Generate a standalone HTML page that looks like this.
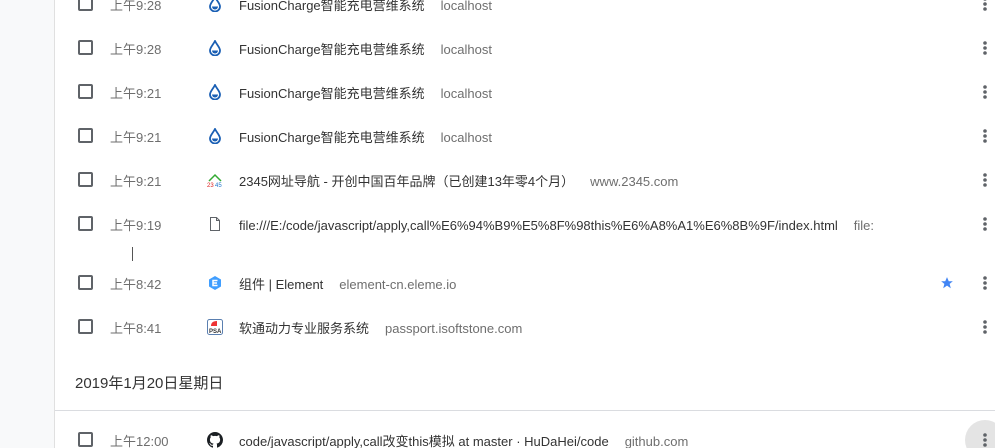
<!DOCTYPE html>
<html style="overflow:hidden;height:448px"><head><meta charset="utf-8"><style>
body{margin:0;width:995px;height:448px;overflow:hidden;background:#f8f9fa;font-family:"Liberation Sans","Noto Sans CJK SC",sans-serif;position:relative}
.card{position:absolute;left:54px;top:0;width:941px;height:448px;background:#fff;border-left:1px solid #e0e0e0}
.row{position:absolute;left:0;width:995px;height:1px;font-size:13px}
.cb{position:absolute;left:78px;width:11px;height:11px;border:2px solid #5f6368;border-radius:2px;top:-8px}
.t{position:absolute;left:110px;top:-6px;line-height:16px;color:#6e6e6e;white-space:nowrap}
.ic{position:absolute;left:207px;top:-8px;width:16px;height:16px}
.ti{position:absolute;left:239px;top:-6px;line-height:16px;color:#333;white-space:nowrap}
.ti span{color:#6e6e6e;margin-left:16px}
.dots{position:absolute;left:983px;top:-7px;width:4px}
</style></head><body>
<div class="card"></div>

<svg width="0" height="0" style="position:absolute"><defs>
<symbol id="drop" viewBox="0 0 16 16"><path d="M8 1 C6 5 3 7.5 3 10.5 A5 5 0 0 0 13 10.5 C13 7.5 10 5 8 1Z" fill="none" stroke="#1a5fb4" stroke-width="1.8"/><path d="M5 10.5 A3 3 0 0 0 11 10.5Z" fill="#1a5fb4"/></symbol>
<symbol id="dots" viewBox="0 0 4 14"><circle cx="2" cy="2" r="1.8" fill="#5f6368"/><circle cx="2" cy="7" r="1.8" fill="#5f6368"/><circle cx="2" cy="12" r="1.8" fill="#5f6368"/></symbol>
</defs></svg>

<div class="row" style="top:4px"><div class="cb"></div><div class="t">上午9:28</div><svg class="ic"><use href="#drop"/></svg><div class="ti">FusionCharge智能充电营维系统<span>localhost</span></div><svg class="dots" width="4" height="14"><use href="#dots"/></svg></div>
<div class="row" style="top:48px"><div class="cb"></div><div class="t">上午9:28</div><svg class="ic"><use href="#drop"/></svg><div class="ti">FusionCharge智能充电营维系统<span>localhost</span></div><svg class="dots" width="4" height="14"><use href="#dots"/></svg></div>
<div class="row" style="top:92px"><div class="cb"></div><div class="t">上午9:21</div><svg class="ic"><use href="#drop"/></svg><div class="ti">FusionCharge智能充电营维系统<span>localhost</span></div><svg class="dots" width="4" height="14"><use href="#dots"/></svg></div>
<div class="row" style="top:136px"><div class="cb"></div><div class="t">上午9:21</div><svg class="ic"><use href="#drop"/></svg><div class="ti">FusionCharge智能充电营维系统<span>localhost</span></div><svg class="dots" width="4" height="14"><use href="#dots"/></svg></div>
<div class="row" style="top:180px"><div class="cb"></div><div class="t">上午9:21</div><svg class="ic" viewBox="0 0 16 16"><path d="M2 9 L8 3 L14 9" fill="none" stroke="#3a3" stroke-width="1.5"/><text x="0" y="15" font-size="6" font-family="Liberation Sans" fill="#d22">23</text><text x="8" y="15" font-size="6" font-family="Liberation Sans" fill="#27c">45</text></svg><div class="ti">2345网址导航 - 开创中国百年品牌（已创建13年零4个月）<span>www.2345.com</span></div><svg class="dots" width="4" height="14"><use href="#dots"/></svg></div>
<div class="row" style="top:224px"><div class="cb"></div><div class="t">上午9:19</div><svg class="ic" viewBox="0 0 16 16"><path d="M3.5 1.5h6l3 3v10h-9z M9.5 1.5v3h3" fill="none" stroke="#5f6368" stroke-width="1"/></svg><div class="ti">file:///E:/code/javascript/apply,call%E6%94%B9%E5%8F%98this%E6%A8%A1%E6%8B%9F/index.html<span>file:</span></div><svg class="dots" width="4" height="14"><use href="#dots"/></svg></div>
<div style="position:absolute;left:132px;top:247px;width:1px;height:14px;background:#555"></div>
<div class="row" style="top:283px"><div class="cb"></div><div class="t">上午8:42</div><svg class="ic" viewBox="0 0 16 16"><path d="M8 1 L14 4.5 V11.5 L8 15 L2 11.5 V4.5Z" fill="#409eff"/><path d="M10.5 5.5 L6 5.5 L6 10.5 L10.5 10.5 M6 8 H10" fill="none" stroke="#fff" stroke-width="1.5"/></svg><div class="ti">组件 | Element<span>element-cn.eleme.io</span></div><svg style="position:absolute;left:940px;top:-7px" width="14" height="14" viewBox="0 0 24 24"><path d="M12 2l3 7h7l-5.5 4.5 2 7.5L12 16.5 5.5 21l2-7.5L2 9h7z" fill="#4285f4"/></svg><svg class="dots" width="4" height="14"><use href="#dots"/></svg></div>
<div class="row" style="top:327px"><div class="cb"></div><div class="t">上午8:41</div><svg class="ic" viewBox="0 0 16 16"><rect x="0.5" y="0.5" width="15" height="15" rx="2" fill="#fff" stroke="#5a7fb0"/><path d="M4 7 Q4 2 10 2 V7Z" fill="#e33"/><text x="2" y="14" font-size="6" font-weight="bold" font-family="Liberation Sans" fill="#333">PSA</text></svg><div class="ti">软通动力专业服务系统<span>passport.isoftstone.com</span></div><svg class="dots" width="4" height="14"><use href="#dots"/></svg></div>

<div style="position:absolute;left:75px;top:372px;font-size:15px;color:#333">2019年1月20日星期日</div>
<div style="position:absolute;left:55px;top:410px;width:940px;height:1px;background:#dadce0"></div>
<div style="position:absolute;left:965px;top:420px;width:40px;height:40px;border-radius:50%;background:#e4e4e4"></div>
<div class="row" style="top:440px"><div class="cb"></div><div class="t">上午12:00</div><svg class="ic" viewBox="0 0 16 16"><path fill="#1b1f23" d="M8 0C3.58 0 0 3.58 0 8c0 3.54 2.29 6.53 5.47 7.59.4.07.55-.17.55-.38 0-.19-.01-.82-.01-1.49-2.01.37-2.53-.49-2.690-.94-.09-.23-.48-.94-.82-1.13-.28-.15-.68-.52-.01-.53.63-.01 1.08.58 1.23.82.72 1.21 1.87.87 2.33.66.07-.52.28-.87.51-1.07-1.78-.2-3.64-.89-3.64-3.95 0-.87.31-1.59.82-2.15-.08-.2-.36-1.02.08-2.12 0 0 .67-.21 2.2.82.64-.18 1.32-.27 2-.27.68 0 1.36.09 2 .27 1.53-1.04 2.2-.82 2.2-.82.44 1.1.16 1.92.08 2.12.51.56.82 1.27.82 2.15 0 3.07-1.87 3.75-3.65 3.95.29.25.54.73.54 1.48 0 1.07-.01 1.93-.01 2.2 0 .21.15.46.55.38A8.013 8.013 0 0016 8c0-4.42-3.58-8-8-8z"/></svg><div class="ti">code/javascript/apply,call改变this模拟 at master · HuDaHei/code<span>github.com</span></div><svg class="dots" width="4" height="14"><use href="#dots"/></svg></div>
</body></html>
